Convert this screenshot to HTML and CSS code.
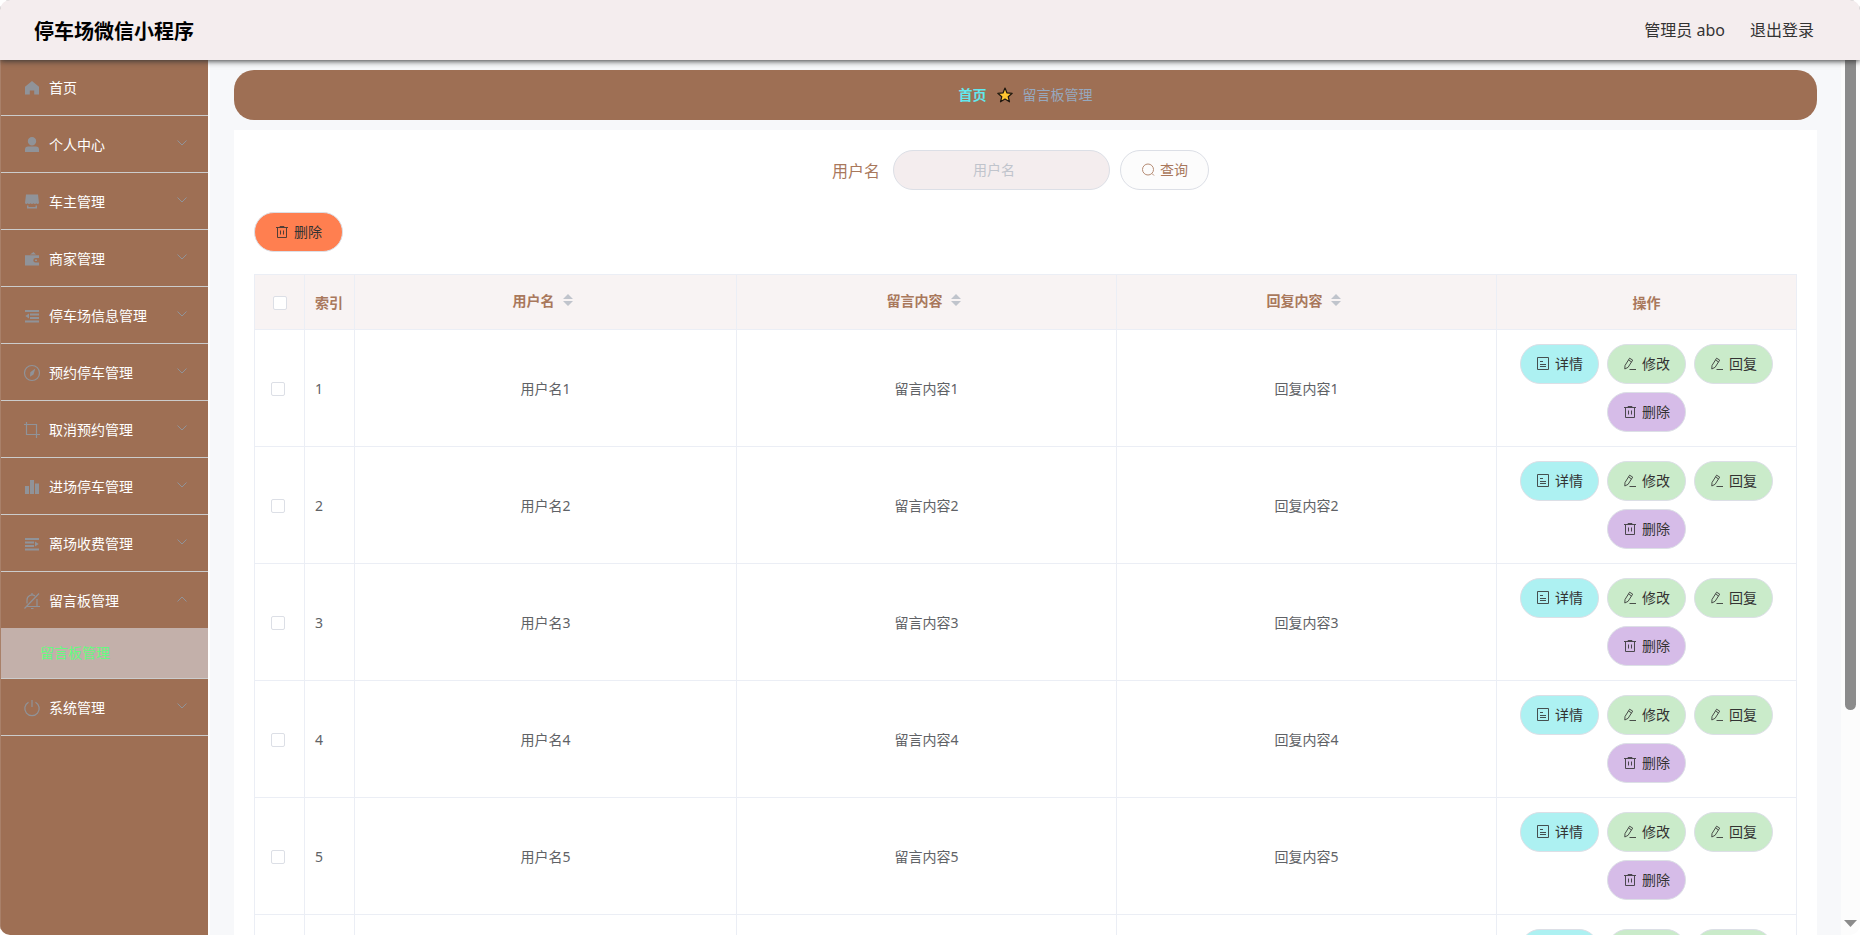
FILE: index.html
```html
<!DOCTYPE html>
<html lang="zh-CN">
<head>
<meta charset="utf-8">
<title>停车场微信小程序</title>
<link rel="stylesheet" href="styles.css">
</head>
<body>
<svg class="sprite" aria-hidden="true">
  <symbol id="home" viewBox="0 0 18 18"><path fill="currentColor" d="M9 2 2 7.800V15.500h4.800v-4h4.400v4H16V7.800z"/></symbol>
  <symbol id="user" viewBox="0 0 18 18"><path fill="currentColor" d="M9 1a4.200 4.200 0 1 1 0 8.400a4.200 4.200 0 0 1 0-8.400zM5 10.500h8a3 3 0 0 1 3 3v2.500H2v-2.500a3 3 0 0 1 3-3z"/></symbol>
  <symbol id="shop" viewBox="0 0 18 18"><path fill="currentColor" d="M3 1.500h12l1 8.500c-.5 1.300-2 1.300-2.600.3-.6 1-2.300 1-2.900 0-.6 1-2.400 1-3 0-.6 1-2.300 1-2.900 0-.6 1-2.100 1-2.600-.3zM4 12.500h1.500V14h7v-1.500H14v3H4z"/></symbol>
  <symbol id="wallet" viewBox="0 0 18 18"><path fill="currentColor" d="M7 4.500 10.500 2 13 4.500zM2 5.300h14V8h-3.500a2.200 2.200 0 0 0 0 4.400H16v3H2zM12 9.500h2V11h-2z"/></symbol>
  <symbol id="fold" viewBox="0 0 18 18"><path fill="currentColor" d="M2 3h14v2H2zM7 6.500h9v2H7zM7 10h9v2H7zM2 13.500h14v2H2zM6 6.500v5L2.300 9z"/></symbol>
  <symbol id="unfold" viewBox="0 0 18 18"><path fill="currentColor" d="M2 3h14v2H2zM2 6.500h9v2H2zM2 10h9v2H2zM2 13.500h14v2H2zM12 6.500v5L15.700 9z"/></symbol>
  <symbol id="compass" viewBox="0 0 18 18"><circle cx="9" cy="9" r="7.500" fill="none" stroke="currentColor" stroke-width="1.200"/><path fill="currentColor" d="M12.300 4.500 10.500 10.500 7 12.800l.3-4.500z"/></symbol>
  <symbol id="crop" viewBox="0 0 18 18"><path fill="none" stroke="currentColor" stroke-width="1.200" d="M3.500 1v12.500H17M1 3.500h12.500V17"/></symbol>
  <symbol id="chart" viewBox="0 0 18 18"><path fill="currentColor" d="M2 8h4v8H2zM7 2h4v14H7zM12 5.500h4V16h-4z"/></symbol>
  <symbol id="bell" viewBox="0 0 18 18"><path fill="none" stroke="currentColor" stroke-width="1.200" d="M4 11.500V8a5 5 0 0 1 8-4.100M14 7v7.500M3.500 14.500H17M1.500 16.500 16 1.500M9 1v2M8 16.500h2.500"/></symbol>
  <symbol id="power" viewBox="0 0 18 18"><path fill="none" stroke="currentColor" stroke-width="1.200" d="M9 1v7M5.500 3.200a7.200 7.200 0 1 0 7 0"/></symbol>
  <symbol id="chev" viewBox="0 0 12 12"><path fill="none" stroke="currentColor" d="m1.500 3.500 4.500 4.500 4.500-4.500"/></symbol>
  <symbol id="search" viewBox="0 0 14 14"><circle cx="7" cy="6.500" r="5.500" fill="none" stroke="currentColor"/><path stroke="currentColor" d="m11 10.500 2 2"/></symbol>
  <symbol id="trash" viewBox="0 0 14 14"><path fill="none" stroke="currentColor" d="M1 2.500h12M2.500 2.500v10h9v-10M5 2.500v-1h4v1M5.500 5.500v4M8.500 5.500v4"/></symbol>
  <symbol id="doc" viewBox="0 0 14 14"><path fill="none" stroke="currentColor" d="M1.500.5h11v12h-11zM4 4.500h3M4 7.500h6M4 9.500h6"/></symbol>
  <symbol id="edit" viewBox="0 0 14 14"><path fill="none" stroke="currentColor" d="m2 8.500 4.600-7.300 3.100 1.900-4.600 7.200L1.800 12zM5.500 3l3 1.900M6.500 12.500H13"/></symbol>
  <symbol id="star" viewBox="0 0 16 16"><path fill="#ffc531" stroke="#1c160f" stroke-linejoin="round" stroke-width="1.200" d="m8 1 2 4.900 5.200.4-4 3.400 1.300 5.100L8 12l-4.500 2.800 1.300-5.100-4-3.400 5.200-.4z"/></symbol>
</svg>
<div class="app">
  <header class="topbar">
    <h1 class="brand">停车场微信小程序</h1>
    <span class="account">管理员 abo</span>
    <button class="logout" type="button">退出登录</button>
  </header>
  <div class="body">
    <nav class="sidebar">
      <a class="item first" href="#"><svg class="mi"><use href="#home"/></svg><span>首页</span></a>
      <a class="item" href="#"><svg class="mi"><use href="#user"/></svg><span>个人中心</span><svg class="arrow"><use href="#chev"/></svg></a>
      <a class="item" href="#"><svg class="mi"><use href="#shop"/></svg><span>车主管理</span><svg class="arrow"><use href="#chev"/></svg></a>
      <a class="item" href="#"><svg class="mi"><use href="#wallet"/></svg><span>商家管理</span><svg class="arrow"><use href="#chev"/></svg></a>
      <a class="item" href="#"><svg class="mi"><use href="#fold"/></svg><span>停车场信息管理</span><svg class="arrow"><use href="#chev"/></svg></a>
      <a class="item" href="#"><svg class="mi"><use href="#compass"/></svg><span>预约停车管理</span><svg class="arrow"><use href="#chev"/></svg></a>
      <a class="item" href="#"><svg class="mi"><use href="#crop"/></svg><span>取消预约管理</span><svg class="arrow"><use href="#chev"/></svg></a>
      <a class="item" href="#"><svg class="mi"><use href="#chart"/></svg><span>进场停车管理</span><svg class="arrow"><use href="#chev"/></svg></a>
      <a class="item" href="#"><svg class="mi"><use href="#unfold"/></svg><span>离场收费管理</span><svg class="arrow"><use href="#chev"/></svg></a>
      <a class="item open" href="#"><svg class="mi"><use href="#bell"/></svg><span>留言板管理</span><svg class="arrow"><use href="#chev"/></svg></a>
      <a class="subitem" href="#">留言板管理</a>
      <a class="item" href="#"><svg class="mi"><use href="#power"/></svg><span>系统管理</span><svg class="arrow"><use href="#chev"/></svg></a>
    </nav>
    <main class="main">
      <div class="crumbs"><a class="crumb-home" href="#">首页</a><svg class="star"><use href="#star"/></svg><span>留言板管理</span></div>
      <section class="card">
        <form class="search">
          <label for="name">用户名</label>
          <input id="name" type="text" placeholder="用户名">
          <button class="btn query" type="button"><svg><use href="#search"/></svg>查询</button>
        </form>
        <button class="btn bulk" type="button"><svg><use href="#trash"/></svg>删除</button>
        <table class="grid">
          <colgroup><col class="c-small"><col class="c-small"><col class="c-name"><col><col><col class="c-ops"></colgroup>
          <thead><tr>
            <th><input type="checkbox" aria-label="全选"></th>
            <th class="idx">索引</th>
            <th><span class="sort">用户名<svg viewBox="0 0 10 12"><path d="M0 5 5 0l5 5zM0 7h10l-5 5z"/></svg></span></th>
            <th><span class="sort">留言内容<svg viewBox="0 0 10 12"><path d="M0 5 5 0l5 5zM0 7h10l-5 5z"/></svg></span></th>
            <th><span class="sort">回复内容<svg viewBox="0 0 10 12"><path d="M0 5 5 0l5 5zM0 7h10l-5 5z"/></svg></span></th>
            <th>操作</th>
          </tr></thead>
          <tbody id="rows"></tbody>
        </table>
      </section>
    </main>
    <div class="scrollbar"><div class="thumb"></div><svg class="down" viewBox="0 0 13 7"><path d="M0 0h13L6.500 7z"/></svg></div>
  </div>
</div>
<script src="rows.js"></script>
</body>
</html>
```
FILE: styles.css
```css
* { box-sizing: border-box; }
body {
  margin: 0;
  background: #fff;
  font-family: "Noto Sans", "Noto Sans CJK SC", sans-serif;
  font-size: 14px;
  color: #333;
}
a { text-decoration: none; color: inherit; }
button, input { font: inherit; }
.sprite { display: none; }
.app {
  display: flex;
  flex-direction: column;
  height: 100vh;
  overflow: hidden;
  border-radius: 10px;
}
.topbar {
  position: relative;
  z-index: 1;
  flex: none;
  display: flex;
  align-items: center;
  height: 60px;
  padding: 0 46px 0 34px;
  background: #f4edee;
  box-shadow: 0 1px 6px #333;
  font-size: 16px;
}
.brand { margin: 0 auto 0 0; font-size: 20px; color: #000; }
.account { padding-bottom: 2px; }
.logout { margin-left: 25px; padding: 0 0 2px; border: 0; background: none; color: #333; }
.body { flex: 1; display: flex; min-height: 0; }

.sidebar {
  flex: none;
  width: 208px;
  background: #9e6f54;
  border-left: 1px solid #a98069;
  color: #fff;
}
.item {
  display: flex;
  align-items: center;
  height: 57px;
  padding: 0 20px 0 22px;
  border-bottom: 1px solid #ccc;
}
.item.first { height: 56px; padding-bottom: 2px; }
.item.open { height: 56px; border-bottom: 0; }
.mi { width: 18px; height: 18px; margin: 2px 8px 0 0; color: #909399; }
.arrow { width: 12px; height: 12px; margin: 0 0 2px auto; color: #909399; }
.open .arrow { transform: rotate(180deg); }
.subitem {
  display: flex;
  align-items: center;
  height: 51px;
  padding: 0 0 2px 39px;
  background: #c3b0aa;
  border-bottom: 1px solid #ccc;
  color: #66fb80;
}

.main {
  flex: 1;
  min-width: 0;
  margin-left: 2px;
  padding: 10px 24px 0;
  background: #f7f8fa;
  overflow: hidden;
}
.crumbs {
  display: flex;
  align-items: center;
  justify-content: center;
  gap: 10px;
  height: 50px;
  margin-bottom: 10px;
  padding-bottom: 2px;
  border-radius: 20px;
  background: #9e6f54;
  color: #97a8be;
}
.crumb-home { font-weight: 700; color: #62e8ee; }
.star { width: 16px; height: 16px; margin-top: 2px; }
.card { padding: 20px; background: #fff; }
.search {
  display: flex;
  justify-content: center;
  align-items: center;
  gap: 10px;
  margin-bottom: 22px;
  padding-right: 10px;
}
.search label { margin-right: 3px; font-size: 16px; color: #a9785c; }
.search input {
  width: 217px;
  height: 40px;
  padding: 0 30px 2px 15px;
  border: 1px solid #dcdfe6;
  border-radius: 20px;
  background: #f4edee;
  text-align: center;
}
.search input::placeholder { color: #c0c4cc; }
.btn {
  display: inline-flex;
  align-items: center;
  justify-content: center;
  gap: 5px;
  height: 40px;
  padding: 0 15px 2px;
  border: 1px solid #dcdfe6;
  border-radius: 20px;
  color: #333;
}
.btn svg { width: 14px; height: 14px; margin-top: 2px; opacity: .85; }
.btn.query { padding: 0 20px 2px; background: #fcfcfc; color: #a9785c; }
.btn.bulk { display: flex; padding: 0 20px 2px; background: #ff7f50; }
.btn.view { background: #adf1f2; }
.btn.edit { background: #caebca; }
.btn.remove { background: #d6bce8; }

.grid {
  width: 100%;
  margin-top: 22px;
  border-collapse: collapse;
  table-layout: fixed;
  color: #606266;
}
.c-small { width: 50px; }
.c-name { width: 382px; }
.c-ops { width: 300px; }
.grid th, .grid td { padding: 0; border: 1px solid #ebeef5; text-align: center; }
.grid th { height: 55px; background: #f8f3f3; color: #a9785c; }
.grid td { height: 117px; }
.grid .idx { padding-left: 10px; text-align: left; }
.grid .pick { padding-right: 3px; }
.grid input {
  appearance: none;
  display: block;
  width: 14px;
  height: 14px;
  margin: 2px auto 0;
  border: 1px solid #dcdfe6;
  border-radius: 2px;
  background: #fff;
}
.sort { display: inline-flex; align-items: center; gap: 8px; padding: 0 6px 5px 0; }
.sort svg { width: 10px; height: 12px; fill: #c0c4cc; }
.ops { display: flex; flex-wrap: wrap; justify-content: center; gap: 8px; padding: 0 16px; }

.scrollbar {
  flex: none;
  display: flex;
  flex-direction: column;
  justify-content: space-between;
  align-items: center;
  width: 19px;
  padding-bottom: 8px;
  background: #fcfcfc;
}
.thumb { width: 11px; height: 75%; border-radius: 0 0 6px 6px; background: #8b8b8b; }
.down { width: 13px; height: 7px; fill: #8b8b8b; }
```
FILE: rows.js
```js
const button = (kind, icon, text) =>
  `<button type="button" class="btn ${kind}"><svg><use href="#${icon}"/></svg>${text}</button>`;
document.getElementById('rows').innerHTML = [1, 2, 3, 4, 5, 6].map(n => `
  <tr>
    <td class="pick"><input type="checkbox" aria-label="选择第${n}行"></td>
    <td class="idx">${n}</td>
    <td>用户名${n}</td>
    <td>留言内容${n}</td>
    <td>回复内容${n}</td>
    <td><div class="ops">${button('view', 'doc', '详情')}${button('edit', 'edit', '修改')}${button('edit', 'edit', '回复')}${button('remove', 'trash', '删除')}</div></td>
  </tr>`).join('');
```
